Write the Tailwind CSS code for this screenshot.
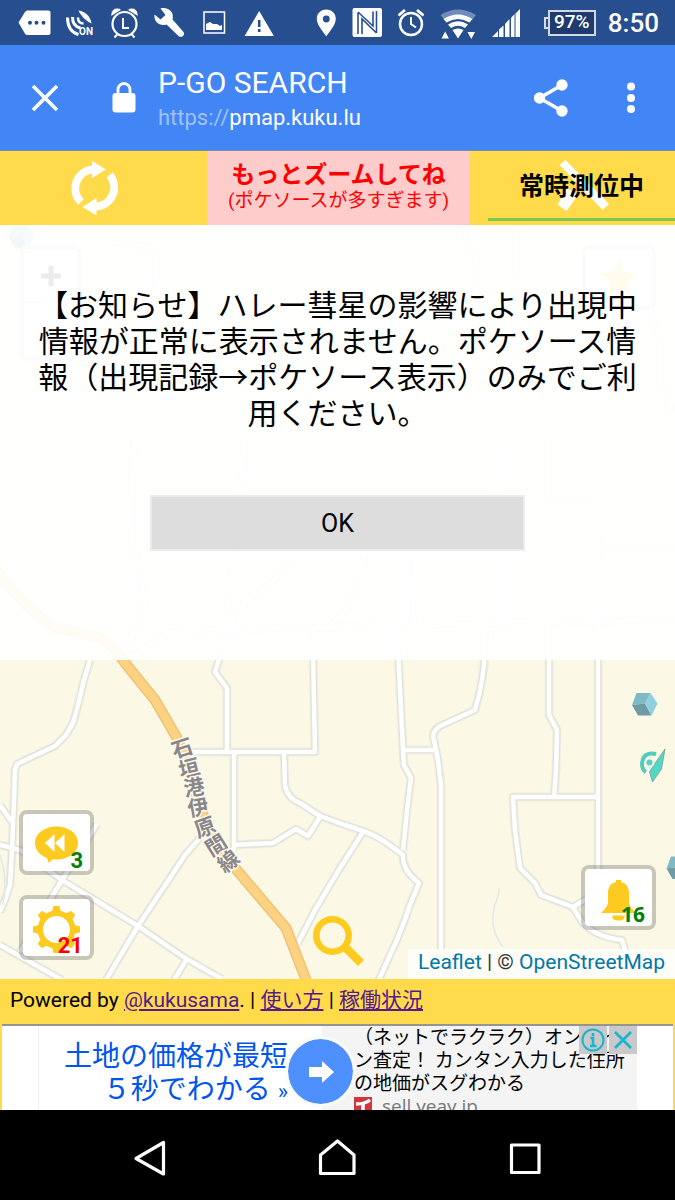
<!DOCTYPE html>
<html lang="ja">
<head>
<meta charset="utf-8">
<meta name="viewport" content="width=device-width, initial-scale=1">
<title>P-GO SEARCH</title>
<script src="https://cdn.jsdelivr.net/npm/@tailwindcss/browser@4"></script>
</head>
<body class="flex min-h-screen flex-col bg-black font-['Roboto','Noto_Sans_CJK_JP',sans-serif] text-black">

<!-- Status bar -->
<div class="flex h-[45px] items-center justify-between bg-[#274f8f] pl-3 pr-4 text-white">
  <div class="flex items-center">
    <svg class="h-[45px] w-[45px]" viewBox="11.5 0 45 45" fill="#fff"><path d="M26.5 10.500H48q2 0 2 2V33q0 2-2 2H26.500q-1 0-2-1.200L18 22.500 24.500 12q1-1.500 2-1.500z"/><g fill="#274f8f"><circle cx="29.500" cy="22.700" r="2"/><circle cx="36" cy="22.700" r="2"/><circle cx="43" cy="22.700" r="2"/></g></svg>
    <svg class="h-[45px] w-[45px]" viewBox="56.500 0 45 45" fill="none" stroke="#fff"><path d="M78 10.500c7 1 12 6 13 13-5-2-11-8-13-13z" fill="#fff" stroke="none"/><path d="M67 17.500c0 9 4 15 11 17" stroke-width="3"/><path d="M72 17c0 6 3 10 8 11" stroke-width="3"/><path d="M77.500 17.500c0 4 2 6 5.500 6" stroke-width="2.500"/><text x="78.500" y="34.800" font-size="10" font-weight="700" font-family="Roboto" fill="#fff" stroke="none">ON</text></svg>
    <svg class="h-[45px] w-[45px]" viewBox="101.500 0 45 45" fill="none" stroke="#fff"><circle cx="124" cy="24" r="12" stroke-width="2.200"/><path d="M122.500 18v10h6" stroke-width="2"/><path d="M117 34l-3 3.500M131 34l3 3.500" stroke-width="2"/><path d="M110.500 16.500c-1-7 6-11 10.500-6.500zM137.500 16.500c1-7-6-11-10.500-6.500z" fill="#fff" stroke="#274f8f" stroke-width=".8"/></svg>
    <svg class="h-[45px] w-[45px]" viewBox="146.500 0 45 45" fill="#fff"><path d="M160 8.500c8-2 14 4 12 11l11 12.500c2 3-2 6.500-5 4L166 24.500c-6 2-13-2-12-10l6 5 5-4.500z"/></svg>
    <svg class="h-[45px] w-[45px]" viewBox="191.500 0 45 45"><path d="M203.500 12h20.500v21h-20.500z" fill="none" stroke="#fff" stroke-width="1.500"/><path d="M205.500 30v-6l4-2 3 2 4 0 3 2 2-1v5z" fill="#fff"/></svg>
    <svg class="h-[45px] w-[45px]" viewBox="236.500 0 45 45"><path d="M258.700 11l14.600 25h-29.200z" fill="#fff"/><path d="M258.700 20v7M258.700 29v3" stroke="#274f8f" stroke-width="2.600"/></svg>
  </div>
  <div class="flex items-center gap-4">
    <svg class="h-[45px] w-5" viewBox="317 0 20 45"><path d="M327.300 9.500c5.500 0 9.500 4 9.500 9.300 0 5.700-5 11.200-9.500 17.500-4.500-6.300-9.500-11.800-9.500-17.500 0-5.300 4-9.300 9.500-9.300z" fill="#fff"/><circle cx="327.300" cy="19" r="3.400" fill="#274f8f"/></svg>
    <svg class="h-[45px] w-[30px]" viewBox="353 0 30 45"><rect x="353.500" y="8" width="29.500" height="29" rx="2" fill="#fff"/><path d="M359 34V12.500M359 12l15 14V11.500M377.500 11v22M377.500 33L363 19v15" fill="none" stroke="#274f8f" stroke-width="1.600"/></svg>
    <svg class="h-[45px] w-[26px]" viewBox="398 0 26 45" fill="none" stroke="#fff"><circle cx="411" cy="24" r="11" stroke-width="2.500"/><path d="M411 17v7l5 3.500" stroke-width="2"/><path d="M398.500 15.500l6.500-5.500M423.500 15.500L417 10" stroke-width="2.800"/></svg>
    <svg class="h-[45px] w-9" viewBox="440.500 0 36 45"><path d="M441 15q17.500-11 35.500 0l-3.500 4.500q-14-9-28.500 0z" fill="#6f8cbb"/><path d="M444 19q14.500-9 29 0l-3 3.500q-11.500-7-23 0zM448.500 24.500q10-6.500 20 0l-3 3.500q-7-4.500-14 0zM453 30q5.500-3 11 0l-5.500 8.500z" fill="#fff"/><path d="M442 38.500l3.700-7 3.700 7zM468 32h7.500l-3.700 7z" fill="#fff"/></svg>
    <svg class="h-[45px] w-7" viewBox="491 0 28 45" fill="#fff"><path d="M491 37l6-6v6zM498 37V29.500l4.500-4V37zM504 37V24l4.500-5V37zM510 37V18l3.500-4V37zM514.500 37V13.500L519 9v28z"/></svg>
    <div class="flex items-center pl-2">
      <div class="h-3 w-1 border-2 border-r-0 border-white/80"></div>
      <div class="flex h-[26px] w-12 items-center justify-center border-2 border-white/80 bg-[#1d3b6c] text-[19px] font-medium">97%</div>
    </div>
    <div class="-ml-1 text-[26px] font-medium leading-none">8:50</div>
  </div>
</div>

<!-- Browser tab header -->
<header class="flex h-[106px] items-center border-b border-[#7f8aa8] bg-[#4285f4] text-white">
  <button class="ml-7 h-9 w-9" aria-label="閉じる"><svg viewBox="0 0 36 36" fill="none" stroke="#fff" stroke-width="3.600"><path d="M5 6l24 24M29 6L5 30"/></svg></button>
  <svg class="ml-[46px] h-9 w-7" viewBox="0 0 28 36" fill="none"><rect x="2.500" y="13" width="23" height="19.500" rx="3" fill="#fff"/><path d="M8 14V9.500a6 6 0 0 1 12 0V14" stroke="#fff" stroke-width="2.800"/></svg>
  <div class="ml-5 flex-1">
    <h1 class="text-[30px] leading-10">P-GO SEARCH</h1>
    <p class="text-[22px] leading-[30px]"><span class="text-white/50">https://</span>pmap.kuku.lu</p>
  </div>
  <button class="h-10 w-9" aria-label="共有"><svg viewBox="0 0 36 40" fill="#fff"><path d="M29 7L6.500 20 29 33" fill="none" stroke="#fff" stroke-width="3.500"/><circle cx="29" cy="7" r="5.700"/><circle cx="6.500" cy="20" r="5.700"/><circle cx="29" cy="33" r="5.700"/></svg></button>
  <button class="ml-[42px] mr-6 h-10 w-10" aria-label="メニュー"><svg viewBox="0 0 40 40" fill="#fff"><circle cx="20" cy="8.500" r="4"/><circle cx="20" cy="20" r="4"/><circle cx="20" cy="31" r="4"/></svg></button>
</header>

<!-- Map toolbar -->
<div class="flex h-[74px] bg-[#ffdb4c]">
  <button class="flex flex-1 items-center justify-center pr-5" aria-label="更新">
    <svg class="h-14 w-12" viewBox="70 159 48 56"><path d="M81 201A19 19 0 0 1 93 168.500M109.500 174A19 19 0 0 1 95 205.500" fill="none" stroke="#fff" stroke-width="8"/><path d="M92 160l14 8.500L92 177zM96.500 197v17.500L82.500 206z" fill="#fff"/></svg>
  </button>
  <div class="flex w-[263px] flex-col items-center bg-[#ffcccc] pt-2 text-[#f00]">
    <strong class="text-2xl leading-8">もっとズームしてね</strong>
    <span class="text-[19px] leading-5">(ポケソースが多すぎます)</span>
  </div>
  <button class="relative flex flex-1 flex-col items-center pl-[18px]">
    <svg class="absolute left-[87px] top-2 h-[54px] w-[54px]" viewBox="557 159 54 54" fill="#fff"><path d="M559.500 165l6-5 43.500 44-6.500 6zM557.500 204.500l9 6.500L578 195l-11-7z"/></svg>
    <span class="relative mt-4 text-[25px] font-bold leading-10">常時測位中</span>
    <span class="mt-auto mb-1 h-[3px] w-full bg-[#7cc954]"></span>
  </button>
</div>

<!-- Map -->
<main class="relative flex-1 overflow-hidden bg-[#fbf8e5]">
  <svg class="absolute inset-0 h-full w-full" viewBox="0 225 675 754" preserveAspectRatio="xMidYMin slice" fill="none" stroke-linejoin="round">
    <defs>
      <g id="roads">
        <path d="M90 660L84 680 78 705 73 723 66 735 55 746 38 754 17 764 15 770 14 800 12 850 10 885 5 900 0 912"/>
        <path d="M0 805L12 822M0 845L20 850 62 880 138 926 185 958 222 979M97 824L62 880 50 900 20 952M0 945L62 980"/>
        <path d="M200 838L185 855 170 878 138 926 106 980M187 959L174 980"/>
        <path d="M222 650L215 672 227 688V750M190 752H315L313 650M234 752V850"/>
        <path d="M284 752L285 785Q287 798 300 803L320 816 345 825 366 832Q380 837 403 855 402 870 419 883L410 905Q400 935 390 955L378 982"/>
        <path d="M234 845L273 843 296 829 308 836 320 817M363 832L340 868 315 910 297 945"/>
        <path d="M398 650L403 750 404 765 411 778 407 810 403 850M485 650Q484 680 475 710L440 726Q431 732 434 740L438 760 441 785V950M403 750H437"/>
        <path d="M549 650V715L557 730 556 770 554 797M598 420V870M598 797H513L515 830 520 868 535 883 541 895 573 907 590 897M573 907L582 922Q595 937 622 940L628 960"/>
        <path d="M135 440L130 520 133 545 145 600 125 655M130 658L170 632 400 625 675 620M245 440L235 550 222 650M414 555L413 623M497 440V640M549 440V500H598M598 548H675M313 650V628M398 650V627M485 650V625M549 650V625M364 555Q362 600 330 625M290 555Q285 580 245 600L232 640"/>
        <path d="M465 225Q466 250 476 260V340M515 225V265L522 300M110 240L155 250 160 330M640 290Q665 330 660 380L675 420"/>
      </g>
    </defs>
    <use href="#roads" stroke="#efeee2" stroke-width="9"/>
    <use href="#roads" stroke="#e2e2d8" stroke-width="7"/>
    <use href="#roads" stroke="#fff" stroke-width="4.500"/>
    <path d="M499 888Q499 896 495 904 488 928 503 947M0 855Q8 880 3 905" stroke="#dcebe6" stroke-width="1.500"/>
    <path d="M-5 568Q25 610 56 628L100 638Q113 645 125 663L155 700 177 738 192 780 208 830 235 868 286 928 308 985" stroke="#f0c273" stroke-width="11"/>
    <path d="M-5 568Q25 610 56 628L100 638Q113 645 125 663L155 700 177 738 192 780 208 830 235 868 286 928 308 985" stroke="#fdd283" stroke-width="8"/>
    <g fill="#8a8788" stroke="#fffaf0" stroke-width="3" paint-order="stroke" font-family="Noto Sans CJK JP" font-size="21" font-weight="700" text-anchor="middle">
      <text transform="translate(182 748) rotate(-18)" y="8">石</text>
      <text transform="translate(189 768) rotate(-14)" y="8">垣</text>
      <text transform="translate(194 787) rotate(-10)" y="8">港</text>
      <text transform="translate(198 807) rotate(-10)" y="8">伊</text>
      <text transform="translate(205 827) rotate(-20)" y="8">原</text>
      <text transform="translate(216 845) rotate(-32)" y="8">間</text>
      <text transform="translate(228 861) rotate(-38)" y="8">線</text>
    </g>
    <g id="cube"><path d="M636.500 693h14l-5.500 10.500-13 1.500z" fill="#7fb9c6"/><path d="M632 705l13-1.500 6.500 12h-13.500z" fill="#6f9ba4"/><path d="M650.500 693l7 10.500-6 12-6.500-12z" fill="#8fd0de"/></g>
    <use href="#cube" x="34.500" y="163.500"/>
    <use href="#cube" x="-623" y="-467"/>
    <path d="M665 749l-3.500 20-9 13-3-10 5-8z" fill="#52d6c6" stroke="#7a9c96" stroke-width=".8"/>
    <path d="M656 754q-12-3-14 9 0 7 4 9" stroke="#4fcdbd" stroke-width="4"/>
    <circle cx="649.500" cy="762.500" r="4" fill="#52d6c6" stroke="#f3f5e6" stroke-width="2"/>
  </svg>

  <div class="absolute left-5 top-5 flex w-[61px] flex-col rounded-lg border-4 border-black/20 bg-white">
    <button class="h-[54px] border-b border-gray-300" aria-label="拡大"><svg class="mx-auto h-6 w-6" viewBox="0 0 24 24" stroke="#000" stroke-width="5"><path d="M12 2v20M2 12h20"/></svg></button>
    <button class="h-[54px]" aria-label="縮小"></button>
  </div>
  <button class="absolute right-[19px] top-5 flex h-[65px] w-[74px] items-center justify-center rounded-lg border-4 border-black/20 bg-white" aria-label="お気に入り"><svg class="h-10 w-10" viewBox="0 0 40 40"><path d="M20 1l5 13 14 1-11 9 4 14-12-8-12 8 4-14L1 15l14-1z" fill="#fdcb20"/></svg></button>

  <!-- Notice -->
  <section class="relative flex flex-col items-center bg-white/92 px-9 pt-[63px] pb-[109px]" role="dialog" aria-label="お知らせ">
    <p class="text-center text-3xl leading-9">【お知らせ】ハレー彗星の影響により出現中情報が正常に表示されません。ポケソース情報（出現記録→ポケソース表示）のみでご利用ください。</p>
    <button class="mt-[63px] h-14 w-[375px] max-w-full border-2 border-[#ebebeb] bg-[#ddd] pt-0.5 text-[25px]">OK</button>
  </section>

  <div class="absolute bottom-[19px] left-[19px] flex flex-col gap-5">
    <button class="relative h-[65px] w-[75px] rounded-lg border-4 border-black/20 bg-white bg-clip-padding" aria-label="履歴 3">
      <svg class="absolute inset-0 h-full w-full" viewBox="23 815 67 57"><path d="M56.500 827.500c12 0 21.500 7 21.500 16.500s-9.500 16.500-21.500 16.500h-4L48.500 864 47 859c-7-2.500-12-8-12-15 0-9.500 9.500-16.500 21.500-16.500z" fill="#fdcb20"/><path d="M54.500 835v18l-9.500-9zM64.500 835v18l-9.500-9z" fill="#fff"/></svg>
      <span class="absolute right-[7px] bottom-0 text-[22px] font-bold leading-5 text-[#008000]">3</span>
    </button>
    <button class="relative h-[65px] w-[75px] rounded-lg border-4 border-black/20 bg-white bg-clip-padding" aria-label="設定 21">
      <svg class="absolute inset-0 h-full w-full" viewBox="23 899 67 57"><circle cx="56.500" cy="929.500" r="16.200" fill="none" stroke="#fdcb20" stroke-width="5.500"/><g fill="#fdcb20"><path id="tooth" d="M51.500 914l2-8h6l2 8z"/><use href="#tooth" transform="rotate(45 56.500 929.500)"/><use href="#tooth" transform="rotate(90 56.500 929.500)"/><use href="#tooth" transform="rotate(135 56.500 929.500)"/><use href="#tooth" transform="rotate(180 56.500 929.500)"/><use href="#tooth" transform="rotate(225 56.500 929.500)"/><use href="#tooth" transform="rotate(270 56.500 929.500)"/><use href="#tooth" transform="rotate(315 56.500 929.500)"/></g></svg>
      <span class="absolute right-[7px] bottom-0 text-[22px] font-bold leading-5 text-[#f00]">21</span>
    </button>
  </div>

  <button class="absolute bottom-2.5 left-1/2 h-[54px] w-[52px] -translate-x-1/2" aria-label="検索"><svg viewBox="311 915 52 54" fill="none" stroke="#fdcb20"><circle cx="331.500" cy="935.500" r="16.200" stroke-width="6.500"/><path d="M343 946l17 17" stroke-width="8.500"/></svg></button>

  <button class="absolute right-[19px] bottom-[49px] h-[65px] w-[75px] rounded-lg border-4 border-black/20 bg-white bg-clip-padding" aria-label="通知 16">
    <svg class="absolute inset-0 h-full w-full" viewBox="585 869 67 57" fill="#fdcb20"><path d="M616 882v-2h5v2c5 1 8 5 8 11v8c0 5 3 8 7 12h-35c4-4 7-7 7-12v-8c0-6 3-10 8-11zM612 915.500h13c-1 5-3.500 5-6.500 5s-5.500 0-6.500-5z"/></svg>
    <span class="absolute right-[7px] bottom-0.5 font-['Open_Sans',sans-serif] text-[21px] font-bold leading-5 text-[#008000]">16</span>
  </button>

  <p class="absolute right-0 bottom-0 h-[30px] bg-white/70 px-2.5 text-[21px] leading-[27px] text-[#333]"><a class="text-[#0078a8]" href="#">Leaflet</a> | © <a class="text-[#0078a8]" href="#">OpenStreetMap</a></p>
</main>

<footer class="bg-[#ffdb4c]">
  <p class="h-[45px] px-[10px] text-[21px] leading-[43px]">Powered by <a class="text-[#551a8b] underline" href="#">@kukusama</a>. | <a class="text-[#551a8b] underline" href="#">使い方</a> | <a class="text-[#551a8b] underline" href="#">稼働状況</a></p>
  <!-- Advertisement -->
  <div class="mx-0.5 flex h-[86px] overflow-hidden border-t-2 border-[#949494] bg-white pr-[36px] pl-9">
    <a href="#" class="flex flex-1 flex-col items-end border-l border-[#eee] pt-3.5 text-[28px] leading-[33px] whitespace-nowrap text-[#0055ee]"><span>土地の価格が最短</span><span>５秒でわかる <span class="text-[22px]">»</span></span></a>
    <div class="relative flex w-[349px] bg-[linear-gradient(90deg,#fff_34px,#f4f4f4_34px)] pl-[66px]">
      <div class="absolute left-0 top-[13px] flex h-[65px] w-[65px] items-center justify-center rounded-full bg-[#4d90fe] outline-3 outline-[#fafafa]"><svg class="h-6 w-7" viewBox="0 0 28 24" fill="#fff"><path d="M2 7h13V1l12 11-12 11v-6H2z"/></svg></div>
      <div class="text-[19px] leading-[23px] whitespace-nowrap">
        <p>（ネットでラクラク）オンライ</p>
        <p>ン査定！ カンタン入力した住所</p>
        <p>の地価がスグわかる</p>
        <p class="flex items-start gap-2.5 font-['Open_Sans',sans-serif] leading-[22px] text-[#777]"><svg class="mt-0.5 h-5 w-[18px]" viewBox="0 0 18 20"><path d="M0 0h18v20H0z" fill="#d3353e"/><path d="M2 7q9 0 14-4M9 6v12" fill="none" stroke="#fff" stroke-width="3.500"/></svg>sell.yeay.jp</p>
      </div>
      <div class="absolute right-0 top-0 flex gap-0.5">
        <button class="h-7 w-7 bg-[#c9c9c9]" aria-label="広告について"><svg viewBox="0 0 28 28" fill="none" stroke="#1ab4cf"><circle cx="14" cy="14" r="10.500" stroke-width="2"/><path d="M11.500 12H14v8M11 20h6.500M14 7v3" stroke-width="2.600"/></svg></button>
        <button class="h-7 w-7 bg-[#c9c9c9]" aria-label="広告を閉じる"><svg viewBox="0 0 28 28" stroke="#1ab4cf" stroke-width="2.800"><path d="M6 6l16 16M22 6L6 22"/></svg></button>
      </div>
    </div>
  </div>
</footer>

<!-- System navigation -->
<nav class="grid h-[90px] grid-cols-3 place-items-center bg-black px-14 pt-1.5">
  <button class="h-10 w-10" aria-label="戻る"><svg viewBox="130 1138 40 40" fill="none" stroke="#fff" stroke-width="3.200" stroke-linejoin="round"><path d="M136 1158.500L163.500 1142.500V1174z"/></svg></button>
  <button class="h-10 w-10" aria-label="ホーム"><svg viewBox="317 1138 40 40" fill="none" stroke="#fff" stroke-width="3.200" stroke-linejoin="round"><path d="M320.500 1173.500V1155L337.500 1141 354 1155V1173.500z"/></svg></button>
  <button class="h-10 w-10" aria-label="アプリ履歴"><svg viewBox="505 1138 40 40" fill="none" stroke="#fff" stroke-width="3.200" stroke-linejoin="round"><path d="M511.500 1145h27.500v27.500h-27.500z"/></svg></button>
</nav>
</body>
</html>
